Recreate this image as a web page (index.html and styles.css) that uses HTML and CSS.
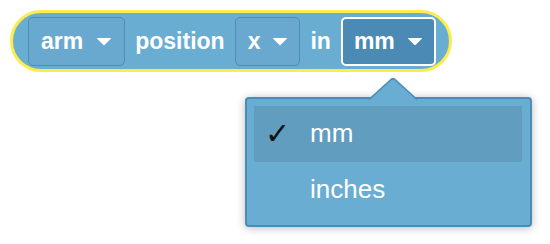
FILE: index.html
```html
<!DOCTYPE html>
<html>
<head>
<meta charset="utf-8">
<link rel="stylesheet" href="styles.css">
</head>
<body>
<div class="block">
  <div class="field"><span>arm</span><svg class="arrow" width="16" height="9" viewBox="0 0 16 9"><path d="M1.5 1 L14.5 1 Q15.5 1 14.8 1.8 L8.8 7.8 Q8 8.6 7.2 7.8 L1.2 1.8 Q0.5 1 1.5 1 Z" fill="#fff"/></svg></div>
  <span class="label">position</span>
  <div class="field narrow"><span>x</span><svg class="arrow" width="16" height="9" viewBox="0 0 16 9"><path d="M1.5 1 L14.5 1 Q15.5 1 14.8 1.8 L8.8 7.8 Q8 8.6 7.2 7.8 L1.2 1.8 Q0.5 1 1.5 1 Z" fill="#fff"/></svg></div>
  <span class="label">in</span>
  <div class="field selected"><span>mm</span><svg class="arrow" width="16" height="9" viewBox="0 0 16 9"><path d="M1.5 1 L14.5 1 Q15.5 1 14.8 1.8 L8.8 7.8 Q8 8.6 7.2 7.8 L1.2 1.8 Q0.5 1 1.5 1 Z" fill="#fff"/></svg></div>
</div>
<div class="menu">
  <svg class="caret" width="48" height="23" viewBox="0 0 48 23"><path d="M0 23 L22 2.5 Q24 0.8 26 2.5 L48 23 Z" fill="#6aadd3"/><path d="M0 22.5 L22 2.5 Q24 0.8 26 2.5 L48 22.5" fill="none" stroke="#4c8bb6" stroke-width="1.6"/></svg>
  <div class="item active"><span class="check">✓</span><span class="text">mm</span></div>
  <div class="item"><span class="check"></span><span class="text">inches</span></div>
</div>
</body>
</html>
```
FILE: styles.css
```css
html, body {
  margin: 0;
  padding: 0;
  background: #ffffff;
}
body {
  width: 550px;
  height: 244px;
  position: relative;
  overflow: hidden;
  font-family: "Liberation Sans", Arial, sans-serif;
}
.block {
  display: inline-flex;
  align-items: center;
  box-sizing: border-box;
  height: 62px;
  margin: 10px 0 0 10px;
  padding: 0 13px 0 15px;
  border: 3px solid #fcec4c;
  border-radius: 31px;
  background: #6aadd3;
  color: #fff;
  font-weight: bold;
  font-size: 23px;
  gap: 10px;
}
.field {
  display: flex;
  align-items: center;
  box-sizing: border-box;
  height: 49px;
  padding: 0 12px 0 12px;
  gap: 13px;
  border: 1px solid #4f8bb4;
  border-radius: 5px;
  background: #6aa9cf;
}
.field.narrow {
  padding: 0 11px 0 12px;
  gap: 12px;
}
.field.selected {
  border: 2px solid #ffffff;
  background: #4a8ab4;
  padding: 0 11px 0 11px;
  gap: 12px;
}
.arrow {
  display: block;
  margin-top: 1px;
}
.menu {
  position: absolute;
  left: 245px;
  top: 97px;
  width: 287px;
  height: 130px;
  box-sizing: border-box;
  padding: 7px 8px 7px 7px;
  border: 2px solid #4c8bb6;
  border-radius: 4px;
  background: #6aadd3;
  box-shadow: 0 1px 8px rgba(0, 0, 0, 0.28);
  font-size: 26px;
  color: #fff;
}
.caret {
  position: absolute;
  left: 122px;
  top: -22px;
  display: block;
}
.item {
  display: flex;
  align-items: center;
  height: 56px;
}
.item.active {
  background: #619dbf;
}
.check {
  width: 56px;
  box-sizing: border-box;
  padding-left: 11px;
  color: #111;
  font-family: "DejaVu Sans", sans-serif;
  font-size: 30px;
  font-weight: bold;
  line-height: 1;
}
.text {
  margin-top: -2px;
}
```
